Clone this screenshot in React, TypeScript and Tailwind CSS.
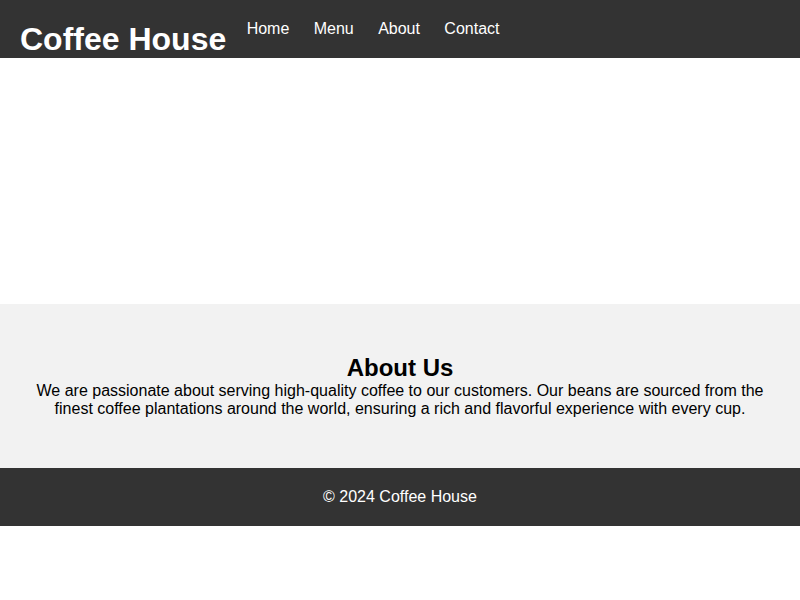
export default function App() {
  return (
    <div className="font-['Liberation_Sans',Arial,sans-serif] text-black">
      <header className="h-[58px] bg-[#333] text-white flex items-start px-5">
        <h1 className="mt-[21px] text-[32px] font-bold leading-[normal]">Coffee House</h1>
        <nav className="ml-[20.4px] mt-[19.5px]">
          <ul className="flex gap-[24.4px] text-[16px] leading-[normal]">
            <li><a href="#">Home</a></li>
            <li><a href="#">Menu</a></li>
            <li><a href="#">About</a></li>
            <li><a href="#">Contact</a></li>
          </ul>
        </nav>
      </header>

      {/* hero (background image not loaded) */}
      <section className="h-[246px] bg-white"></section>

      <section className="bg-[#f2f2f2] py-[50px] px-5 text-center">
        <h2 className="text-[24px] font-bold leading-[normal]">About Us</h2>
        <p className="text-[16px] leading-[normal]">
          We are passionate about serving high-quality coffee to our customers. Our beans are sourced from the finest
          coffee plantations around the world, ensuring a rich and flavorful experience with every cup.
        </p>
      </section>

      <footer className="bg-[#333] text-white text-center py-5 text-[16px] leading-[normal]">
        <p>&copy; 2024 Coffee House</p>
      </footer>
    </div>
  );
}
